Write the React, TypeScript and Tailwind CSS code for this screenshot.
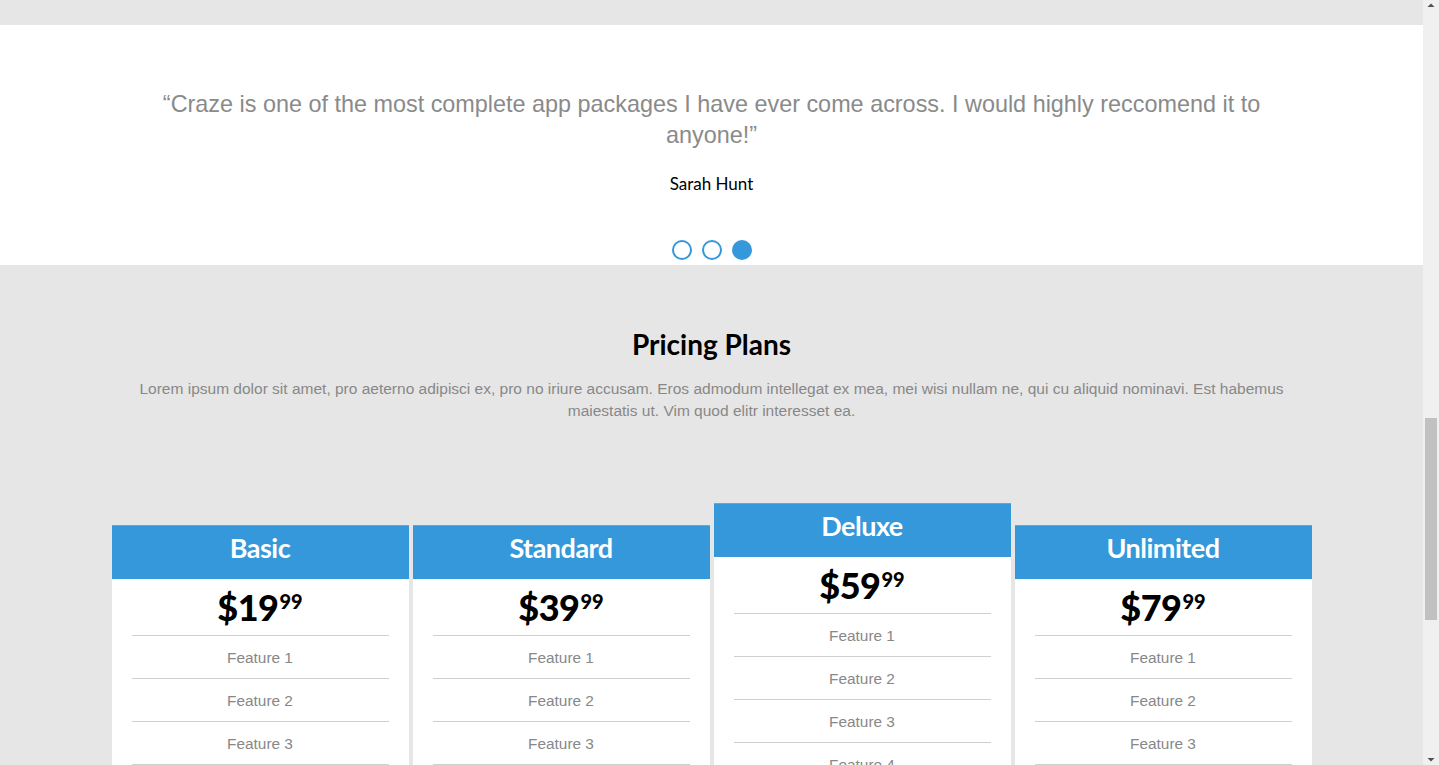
import React from "react";

const plans = [
  { name: "Basic", price: "19", featured: false, features: ["Feature 1", "Feature 2", "Feature 3", "Feature 4", "Feature 5"] },
  { name: "Standard", price: "39", featured: false, features: ["Feature 1", "Feature 2", "Feature 3", "Feature 4", "Feature 5"] },
  { name: "Deluxe", price: "59", featured: true, features: ["Feature 1", "Feature 2", "Feature 3", "Feature 4", "Feature 5"] },
  { name: "Unlimited", price: "79", featured: false, features: ["Feature 1", "Feature 2", "Feature 3", "Feature 4", "Feature 5"] },
];

function Card({ plan }: { plan: (typeof plans)[number] }) {
  return (
    <div className={`w-[297px] bg-white ${plan.featured ? "" : "mt-[22px]"}`}>
      <div className="h-[54px] bg-[#3498db] border-t border-[#5aa9e2] flex items-center justify-center pb-[10px]">
        <span className="text-white text-[27px] font-bold leading-none font-['Lato',sans-serif] tracking-[-0.5px]">{plan.name}</span>
      </div>
      <div className="h-[56px] flex items-center justify-center font-['Lato',sans-serif] text-black">
        <span className="text-[36px] font-black leading-none tracking-[-0.5px]">${plan.price}</span>
        <span className="text-[20px] font-black leading-none self-start mt-[12px] ml-[1px]">99</span>
      </div>
      <ul className="mx-[20px]">
        {plan.features.map((f) => (
          <li key={f} className="h-[43px] border-t border-[#d0d0d0] flex items-center justify-center pt-[1px] text-[15.4px] text-[#888] font-['Liberation_Sans',Arial,sans-serif]">
            {f}
          </li>
        ))}
      </ul>
    </div>
  );
}

export default function App() {
  return (
    <div className="flex w-[1439px] h-[765px] overflow-hidden bg-[#e6e6e6]">
      <div className="w-[1423px] flex flex-col">
        <div className="h-[25px] shrink-0 bg-[#e6e6e6]" />
        <section className="h-[240px] shrink-0 bg-white flex flex-col items-center pt-[64px]">
          <p className="w-[1110px] text-center text-[23.4px] leading-[31px] text-[#8a8a8a] font-['Liberation_Sans',Arial,sans-serif]">
            “Craze is one of the most complete app packages I have ever come across. I would highly reccomend it to anyone!”
          </p>
          <div className="mt-[21px] text-[17px] leading-[24px] text-black font-['Lato',sans-serif]">Sarah Hunt</div>
          <div className="mt-[44px] flex gap-[10px]">
            <span className="w-[20px] h-[20px] rounded-full border-2 border-[#3498db]" />
            <span className="w-[20px] h-[20px] rounded-full border-2 border-[#3498db]" />
            <span className="w-[20px] h-[20px] rounded-full bg-[#3498db]" />
          </div>
        </section>
        <section className="flex-1 bg-[#e6e6e6] flex flex-col items-center pt-[61px]">
          <h2 className="text-[28px] leading-[36px] font-bold text-black font-['Lato',sans-serif]">Pricing Plans</h2>
          <p className="mt-[16px] w-[1170px] text-center text-[15.5px] leading-[22px] text-[#888] font-['Liberation_Sans',Arial,sans-serif]">
            Lorem ipsum dolor sit amet, pro aeterno adipisci ex, pro no iriure accusam. Eros admodum intellegat ex mea, mei wisi nullam ne, qui cu aliquid nominavi. Est habemus maiestatis ut. Vim quod elitr interesset ea.
          </p>
          <div className="mt-[81px] flex items-start gap-[4px]">
            {plans.map((p) => (
              <Card key={p.name} plan={p} />
            ))}
          </div>
        </section>
      </div>
      <div className="w-[16px] shrink-0 bg-[#f0f0f0] flex flex-col items-center">
        <svg width="16" height="17" viewBox="0 0 16 17" className="shrink-0">
          <path d="M4.5 7 L8 3.5 L11.5 7 Z" fill="#505050" />
        </svg>
        <div className="flex-1 w-full flex flex-col">
          <div className="h-[401px]" />
          <div className="mx-[2px] h-[202px] bg-[#c1c1c1]" />
        </div>
        <svg width="16" height="17" viewBox="0 0 16 17" className="shrink-0">
          <path d="M4.5 10 L8 13.5 L11.5 10 Z" fill="#505050" />
        </svg>
      </div>
    </div>
  );
}
